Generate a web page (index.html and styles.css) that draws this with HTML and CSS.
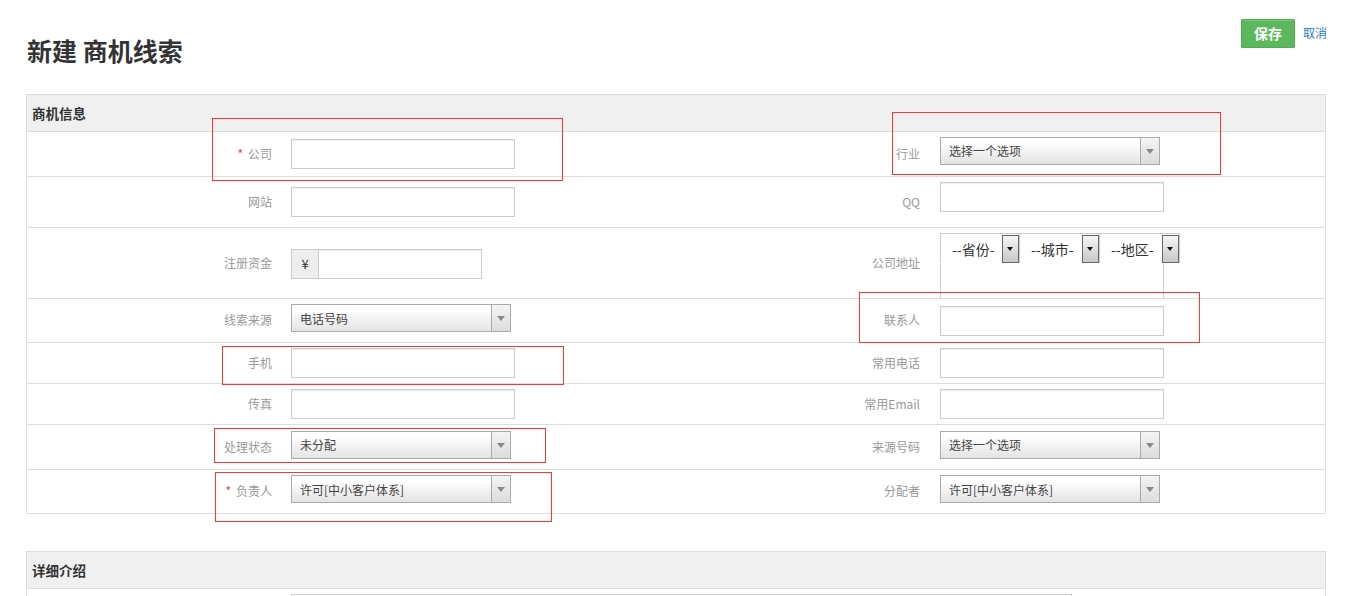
FILE: index.html
```html
<!DOCTYPE html>
<html lang="zh-CN">
<head>
<meta charset="utf-8">
<title>新建 商机线索</title>
<link rel="stylesheet" href="styles.css">
</head>
<body>
<div class="page">
  <div class="topbar">
    <h1 class="title">新建 商机线索</h1>
    <div class="actions">
      <button class="btn-save" type="button">保存</button>
      <a class="link-cancel" href="#">取消</a>
    </div>
  </div>

  <section class="panel">
    <div class="panel-head">商机信息</div>
    <div class="form">
      <div class="row r1">
        <div class="lab"><span class="req">*</span>公司</div>
        <div class="cell"><div class="input"></div></div>
        <div class="lab lab-r">行业</div>
        <div class="cell"><div class="select up7"><span>选择一个选项</span><i class="arr"></i></div></div>
      </div>
      <div class="row r2">
        <div class="lab">网站</div>
        <div class="cell"><div class="input"></div></div>
        <div class="lab lab-r">QQ</div>
        <div class="cell"><div class="input up10"></div></div>
      </div>
      <div class="row r3">
        <div class="lab">注册资金</div>
        <div class="cell"><div class="igroup"><span class="addon">¥</span><span class="ifield"></span></div></div>
        <div class="lab lab-r">公司地址</div>
        <div class="cell cell-top">
          <div class="addr">
            <div class="addr-sels">
              <div class="nsel"><span>--省份-</span><i class="nbtn"></i></div>
              <div class="nsel"><span>--城市-</span><i class="nbtn"></i></div>
              <div class="nsel"><span>--地区-</span><i class="nbtn"></i></div>
            </div>
            <div class="addr-box"></div>
          </div>
        </div>
      </div>
      <div class="row r4">
        <div class="lab">线索来源</div>
        <div class="cell"><div class="select"><span>电话号码</span><i class="arr"></i></div></div>
        <div class="lab lab-r">联系人</div>
        <div class="cell"><div class="input"></div></div>
      </div>
      <div class="row r5">
        <div class="lab">手机</div>
        <div class="cell"><div class="input"></div></div>
        <div class="lab lab-r">常用电话</div>
        <div class="cell"><div class="input"></div></div>
      </div>
      <div class="row r6">
        <div class="lab">传真</div>
        <div class="cell"><div class="input"></div></div>
        <div class="lab lab-r">常用Email</div>
        <div class="cell"><div class="input"></div></div>
      </div>
      <div class="row r7">
        <div class="lab">处理状态</div>
        <div class="cell"><div class="select"><span>未分配</span><i class="arr"></i></div></div>
        <div class="lab lab-r">来源号码</div>
        <div class="cell"><div class="select"><span>选择一个选项</span><i class="arr"></i></div></div>
      </div>
      <div class="row r8">
        <div class="lab"><span class="req">*</span>负责人</div>
        <div class="cell"><div class="select"><span>许可[中小客户体系]</span><i class="arr"></i></div></div>
        <div class="lab lab-r">分配者</div>
        <div class="cell"><div class="select"><span>许可[中小客户体系]</span><i class="arr"></i></div></div>
      </div>
    </div>
  </section>

  <section class="panel panel2">
    <div class="panel-head">详细介绍</div>
    <div class="detail-body">
      <div class="textarea"></div>
    </div>
  </section>

  <div class="mark m1"></div>
  <div class="mark m2"></div>
  <div class="mark m3"></div>
  <div class="mark m4"></div>
  <div class="mark m5"></div>
  <div class="mark m6"></div>
</div>
</body>
</html>
```
FILE: styles.css
```css
* { box-sizing: border-box; }
html, body { margin: 0; padding: 0; background: #fff; }
body {
  font-family: "Noto Sans CJK SC", "Noto Sans", sans-serif;
  font-size: 12px;
  color: #333;
  overflow: hidden;
}
.page {
  position: relative;
  padding: 0 19px 0 26px;
}
.topbar {
  display: flex;
  justify-content: space-between;
  align-items: flex-start;
  height: 94px;
}
.title {
  margin: 32px 0 0 1px;
  font-size: 25px;
  line-height: 36px;
  font-weight: 700;
  color: #333;
}
.actions {
  display: flex;
  align-items: center;
  gap: 8px;
  margin-top: 19px;
  margin-right: -1px;
}
.btn-save {
  width: 54px;
  height: 29px;
  padding: 0;
  border: 1px solid #4cae4c;
  border-radius: 1px;
  background: #5cb85c;
  box-shadow: inset 0 1px 0 rgba(255,255,255,.2);
  color: #fff;
  font-family: inherit;
  font-size: 14px;
  font-weight: 700;
  line-height: 27px;
}
.link-cancel {
  color: #2a7bbf;
  text-decoration: none;
  font-size: 12px;
  margin-top: -2px;
}
.panel {
  border: 1px solid #ddd;
  background: #fff;
}
.panel2 { margin-top: 37px; }
.panel-head {
  height: 37px;
  border-bottom: 1px solid #ddd;
  background: #f0f0f0;
  padding-left: 5px;
  font-size: 13.5px;
  font-weight: 700;
  line-height: 36px;
  color: #333;
}
.form { display: flex; flex-direction: column; }
.row {
  display: grid;
  grid-template-columns: 254px 549px 100px 1fr;
  align-items: center;
  border-bottom: 1px solid #ddd;
}
.row:last-child { border-bottom: 0; }
.r1 { height: 45px; }
.r2 { height: 51px; }
.r3 { height: 71px; }
.r4 { height: 44px; }
.r5 { height: 41px; }
.r6 { height: 41px; }
.r7 { height: 45px; }
.r8 { height: 43px; }
.lab {
  text-align: right;
  padding-right: 9px;
  padding-bottom: 2px;
  color: #999;
  font-size: 12px;
  white-space: nowrap;
}
.lab-r { padding-right: 10px; }
.req {
  color: #e8413b;
  margin-right: 5px;
  font-size: 12px;
}
.cell { padding-left: 10px; display: flex; }
.cell-top { align-self: start; padding-top: 5px; }
.input {
  width: 224px;
  height: 30px;
  border: 1px solid #ccc;
  background: #fff;
  box-shadow: inset 0 1px 1px rgba(0,0,0,.075);
}
.up10 { margin-bottom: 10px; }
.select {
  position: relative;
  width: 220px;
  height: 28px;
  margin-bottom: 5px;
  border: 1px solid #aaa;
  background: linear-gradient(#fff 20%, #f0f0f0 60%, #e4e4e4);
  display: flex;
  align-items: center;
  padding-left: 8px;
  color: #444;
  font-size: 12px;
}
.select.up7 { margin-bottom: 7px; }
.select .arr {
  position: absolute;
  right: 0;
  top: 0;
  bottom: 0;
  width: 19px;
  border-left: 1px solid #aaa;
  background: linear-gradient(#f4f4f4, #dcdcdc);
}
.select .arr::after {
  content: "";
  position: absolute;
  left: 5px;
  top: 11px;
  border-left: 4px solid transparent;
  border-right: 4px solid transparent;
  border-top: 5px solid #888;
}
.igroup {
  display: flex;
  width: 191px;
  height: 30px;
}
.addon {
  width: 28px;
  height: 30px;
  border: 1px solid #ccc;
  background: #eee;
  display: flex;
  align-items: center;
  justify-content: center;
  color: #333;
  font-size: 13px;
}
.ifield {
  flex: 1;
  height: 30px;
  border: 1px solid #ccc;
  border-left: 0;
  box-shadow: inset 0 1px 1px rgba(0,0,0,.075);
}
.addr { display: flex; flex-direction: column; }
.addr-sels {
  display: flex;
  border-top: 1px solid #ccc;
}
.nsel {
  position: relative;
  width: 80px;
  height: 29px;
  border-left: 1px solid #ccc;
  border-right: 1px solid #ccc;
  display: flex;
  align-items: center;
  padding-left: 11px;
  color: #333;
  font-size: 14px;
  background: #fff;
}
.nsel + .nsel { border-left: 0; }
.nbtn {
  position: absolute;
  right: 0;
  top: 1px;
  width: 17px;
  height: 28px;
  border: 1px solid #666;
  background: linear-gradient(#f6f6f6, #c8c8c8);
}
.nbtn::after {
  content: "";
  position: absolute;
  left: 4px;
  top: 11px;
  border-left: 3.5px solid transparent;
  border-right: 3.5px solid transparent;
  border-top: 4px solid #111;
}
.addr-box {
  width: 224px;
  height: 35px;
  border: 1px solid #ccc;
  border-top: 0;
  border-bottom: 0;
  margin-top: 1px;
}
.detail-body {
  padding: 5px 0 0 264px;
  height: 60px;
}
.textarea {
  width: 781px;
  height: 80px;
  border: 1px solid #ccc;
}
.mark {
  position: absolute;
  border: 1px solid #f33;
  pointer-events: none;
}
.m1 { left: 212px; top: 118px; width: 351px; height: 63px; }
.m2 { left: 892px; top: 112px; width: 329px; height: 63px; }
.m3 { left: 859px; top: 292px; width: 341px; height: 51px; }
.m4 { left: 222px; top: 346px; width: 342px; height: 39px; }
.m5 { left: 214px; top: 428px; width: 332px; height: 35px; }
.m6 { left: 215px; top: 472px; width: 337px; height: 50px; }
```
